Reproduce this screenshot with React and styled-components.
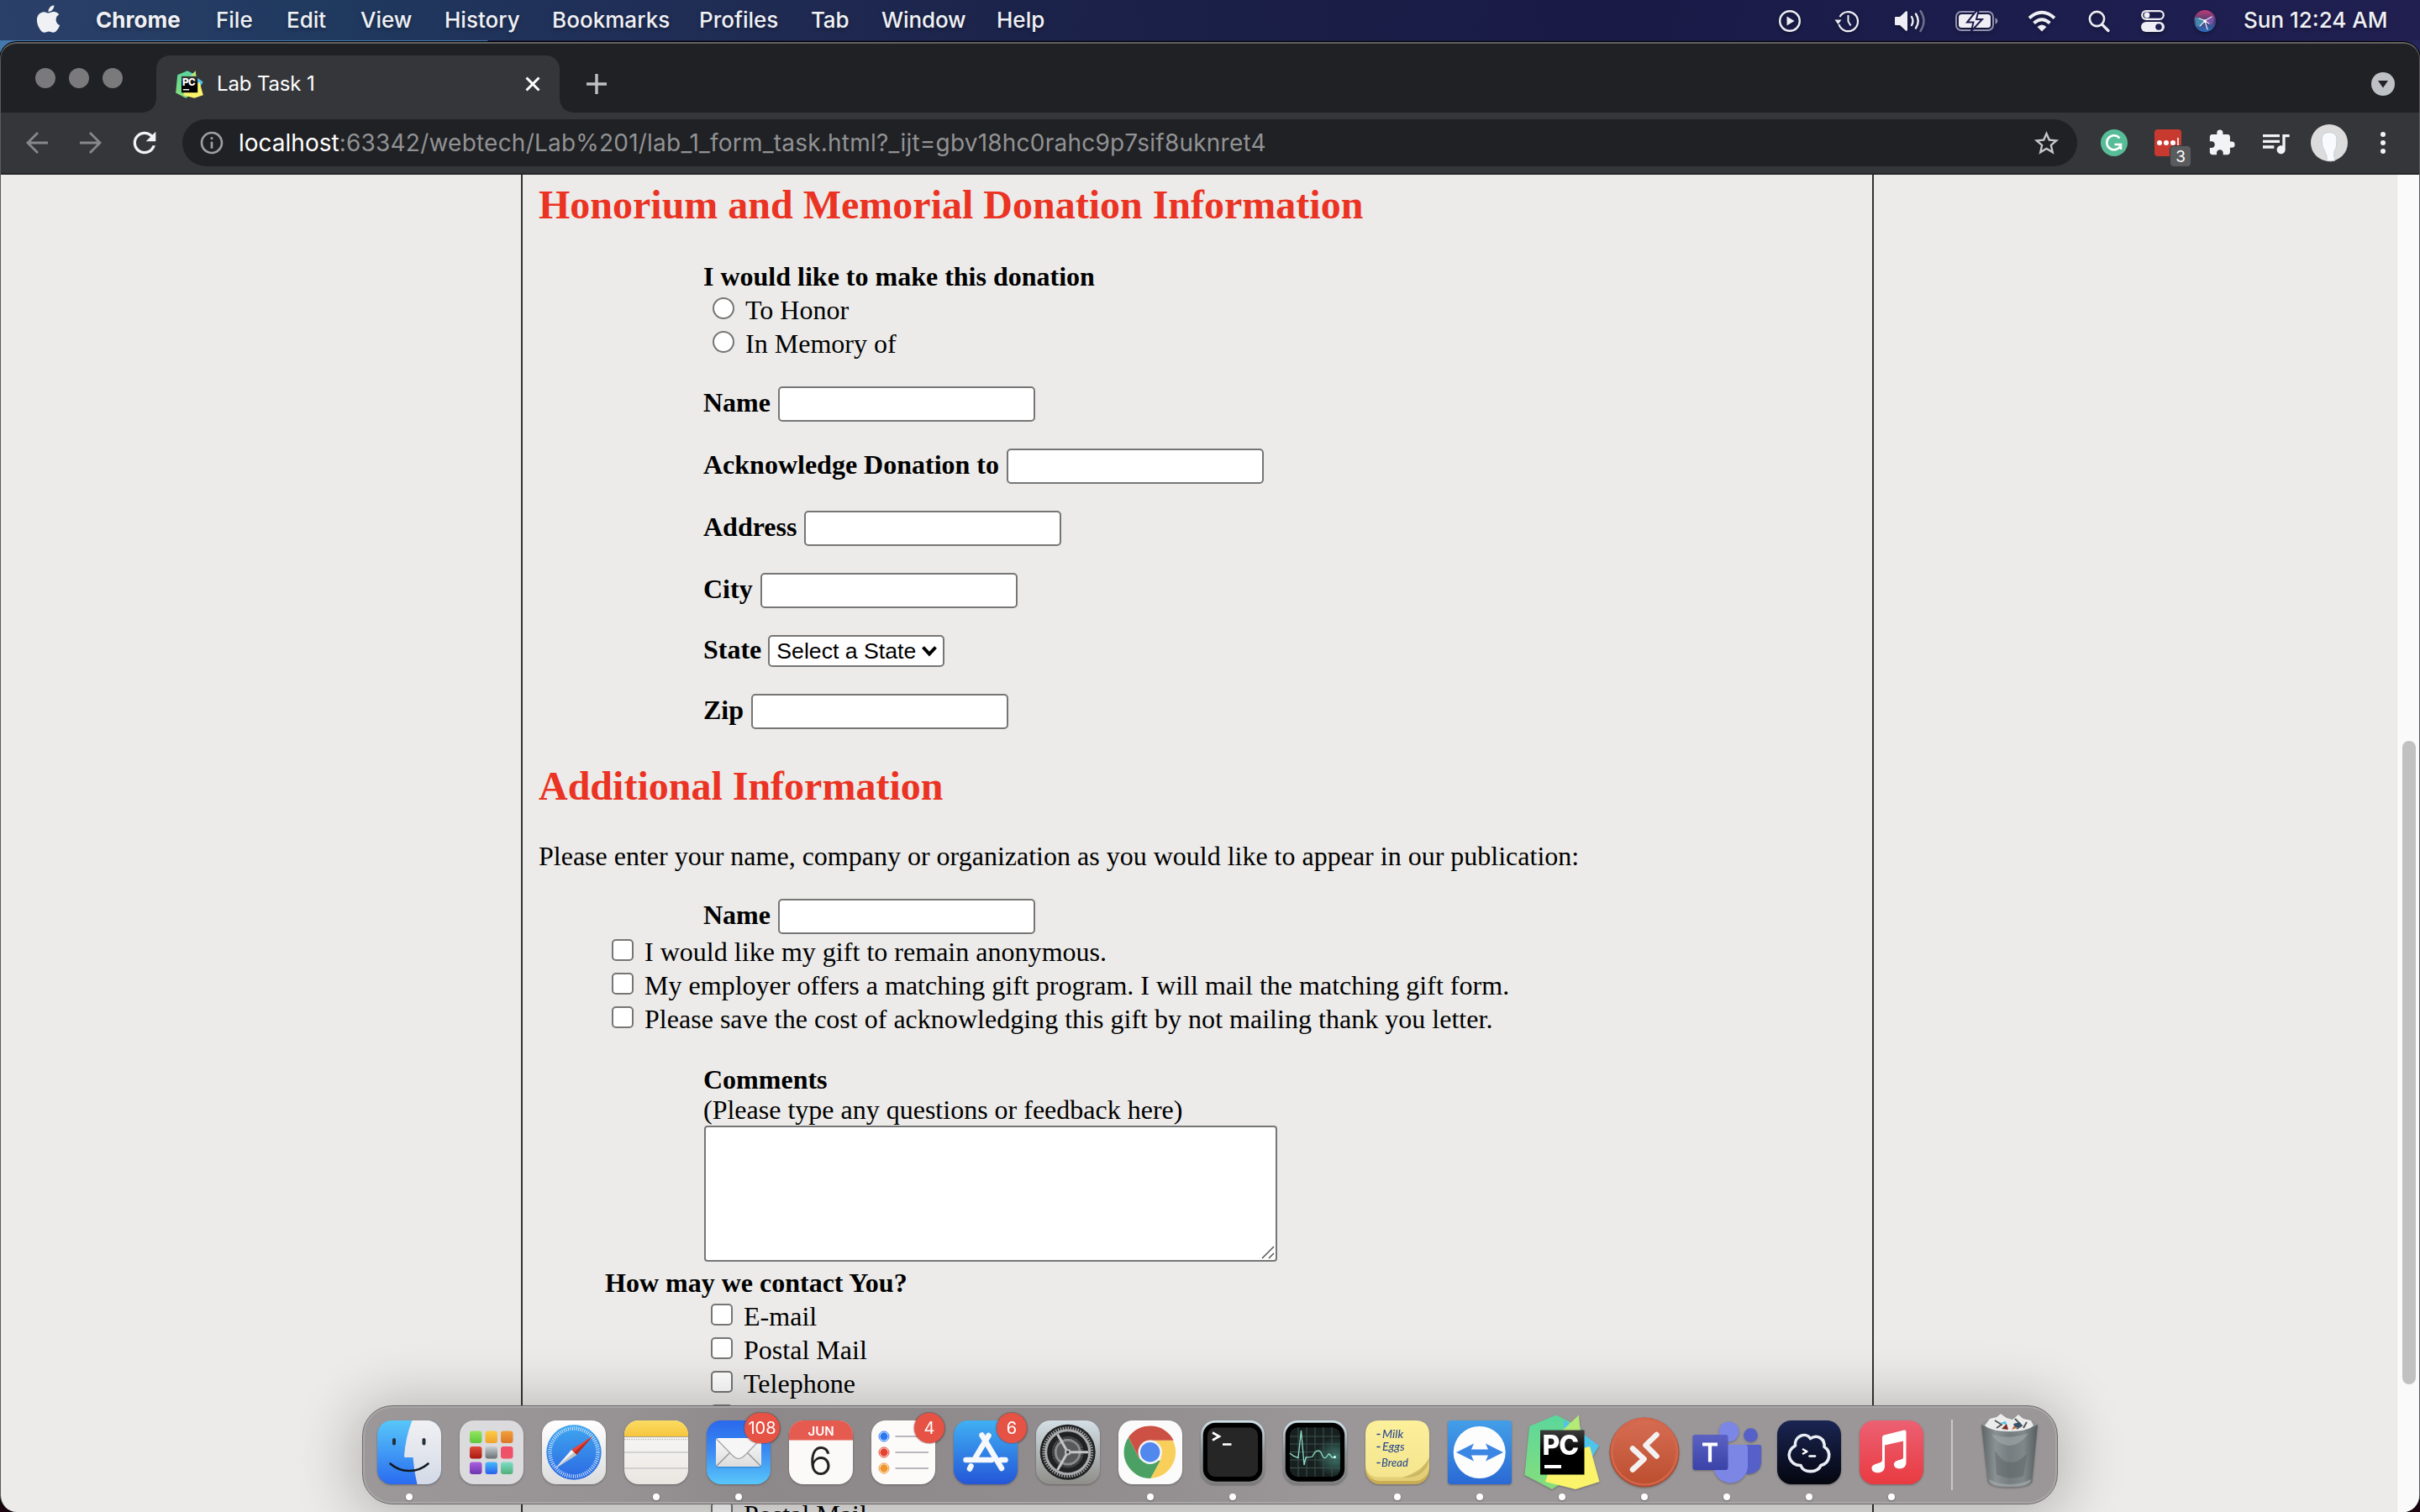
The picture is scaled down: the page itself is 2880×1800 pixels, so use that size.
import React from "react";
import styled, { createGlobalStyle, css } from "styled-components";
import { FaApple } from "react-icons/fa";
import { MdStarBorder, MdRefresh, MdInfoOutline, MdExtension, MdQueueMusic } from "react-icons/md";

const Global = createGlobalStyle`
  * { box-sizing: border-box; }
  html, body { margin: 0; padding: 0; overflow: hidden; }
  svg { display: block; overflow: visible; flex: none; }
`;

const ui = `Inter, Roboto, "Liberation Sans", sans-serif`;

const Desktop = styled.div`
  position: relative;
  width: 2880px;
  height: 1800px;
  display: flex;
  flex-direction: column;
  gap: 2px;
  overflow: hidden;
  background: linear-gradient(90deg, #4379ad 0, #4379ad 580px, #16183a 581px, #1a1a42 2800px, #25265a 100%) 0 0 / 100% 100px no-repeat #1c0410;
  font-family: ${ui};
`;

/* ---------- menu bar ---------- */

const MenuBar = styled.div`
  height: 48px;
  flex: none;
  display: flex;
  align-items: center;
  color: #f0f1f5;
  font-size: 26px;
  background: linear-gradient(90deg, #2b4069 0, #20395f 400px, #20325a 620px, #1f2a52 930px, #1b2148 1300px, #191b46 1900px, #1e1e50 2600px, #201f50 100%);
`;

const AppleSlot = styled.div`
  width: 114px;
  padding-left: 39px;
  padding-bottom: 4px;
`;

const MenuItem = styled.span`
  width: ${(p) => p.$w}px;
  font-weight: ${(p) => (p.$bold ? 700 : 500)};
  letter-spacing: ${(p) => p.$ls || 0}px;
  line-height: 32px;
  white-space: nowrap;
  text-shadow: 0 2px 4px rgba(0, 0, 0, 0.35);
`;

const StatusArea = styled.div`
  margin-left: auto;
  display: flex;
  align-items: center;
`;

const StatusSlot = styled.div`
  width: ${(p) => p.$w}px;
  display: flex;
  justify-content: center;
  padding-top: 2px;
  filter: drop-shadow(0 2px 2px rgba(0, 0, 0, 0.35));
`;

const Clock = styled(MenuItem)`
  margin-left: 20px;
`;

/* ---------- browser chrome ---------- */

const Window = styled.div`
  width: 2880px;
  height: 1750px;
  display: flex;
  flex-direction: column;
  border-radius: 20px;
  border-top: 2px solid #626164;
  border-left: 1px solid #5a5a5c;
  border-right: 1px solid #5a5a5c;
  box-shadow: 0 0 0 1px #000;
  background: #202124;
  overflow: hidden;
`;

const TabStrip = styled.div`
  height: 82px;
  flex: none;
  display: flex;
  align-items: flex-end;
  padding: 0 29px 0 40px;
`;

const Lights = styled.div`
  display: flex;
  gap: 16px;
  padding: 0 40px 29px 1px;
`;

const Light = styled.span`
  width: 24px;
  height: 24px;
  border-radius: 50%;
  background: #7a797c;
`;

const Tab = styled.div`
  position: relative;
  width: 480px;
  height: 68px;
  display: flex;
  align-items: center;
  padding: 0 23px 0 23px;
  border-radius: 16px 16px 0 0;
  background: #35363a;
  color: #fff;
  &::before,
  &::after {
    content: "";
    position: absolute;
    bottom: 0;
    width: 16px;
    height: 16px;
  }
  &::before {
    left: -16px;
    background: radial-gradient(circle at 0 0, transparent 15.5px, #35363a 16px);
  }
  &::after {
    right: -16px;
    background: radial-gradient(circle at 100% 0, transparent 15.5px, #35363a 16px);
  }
`;

const TabTitle = styled.span`
  flex: 1;
  padding-left: 16px;
  font-size: 24px;
  line-height: 30px;
  letter-spacing: -0.15px;
`;

const NewTab = styled.div`
  padding: 0 0 22px 32px;
`;

const TabSearch = styled.div`
  margin: 0 0 20px auto;
`;

const Toolbar = styled.div`
  height: 74px;
  flex: none;
  display: flex;
  align-items: center;
  padding: 0 11px;
  background: #35363a;
  border-bottom: 2px solid #252628;
`;

const ToolSlot = styled.div`
  position: relative;
  width: 64px;
  height: 56px;
  display: flex;
  align-items: center;
  justify-content: center;
  color: ${(p) => (p.$dim ? "#87888b" : "#f1f3f4")};
`;

const Omnibox = styled.div`
  flex: 1;
  height: 56px;
  margin: 0 12px 0 13px;
  display: flex;
  align-items: center;
  padding: 0 19px;
  border-radius: 28px;
  background: #202124;
  color: #c5c7ca;
`;

const Url = styled.div`
  flex: 1;
  padding-left: 16px;
  font-size: 28px;
  line-height: 34px;
  letter-spacing: 0.22px;
  color: #919294;
`;

const Host = styled.span`
  color: #fff;
  letter-spacing: 0;
`;

const LastPass = styled.div`
  width: 32px;
  height: 32px;
  border-radius: 4px;
  background: #c83a30;
  display: flex;
  align-items: center;
  justify-content: center;
`;

const CountBadge = styled.span`
  position: absolute;
  left: 34px;
  top: 31px;
  width: 26px;
  height: 26px;
  border-radius: 5px;
  border: 1px solid #35363a;
  background: #5a5b5d;
  color: #fff;
  font-size: 19px;
  line-height: 26px;
  text-align: center;
`;

/* ---------- page ---------- */

const Viewport = styled.div`
  flex: 1;
  min-height: 0;
  display: flex;
  background: #ecebe9;
  overflow: hidden;
`;

const Page = styled.div`
  width: 2851px;
  padding-left: 619px;
  font-family: "Liberation Serif", "Times New Roman", serif;
  font-size: 32px;
  line-height: 36px;
  color: #000;
  white-space: nowrap;
`;

const Sheet = styled.div`
  width: 1610px;
  height: 1592px;
  padding: 9px 19px 0;
  border-left: 2px solid #333;
  border-right: 2px solid #333;
`;

const Title = styled.h2`
  margin: 0;
  font-size: 48px;
  line-height: 54px;
  font-weight: 700;
  color: #eb3323;
`;

const Group = styled.div`
  display: flex;
  flex-direction: column;
  align-items: flex-start;
  margin-top: ${(p) => p.$mt || 0}px;
  padding-left: ${(p) => p.$indent}px;
  gap: ${(p) => p.$gap || 0}px;
`;

const Line = styled.div`
  margin-top: ${(p) => p.$mt || 0}px;
  font-weight: ${(p) => (p.$bold ? 700 : 400)};
`;

const Field = styled.label`
  display: flex;
  align-items: flex-start;
  gap: ${(p) => (p.$select ? 8 : 9)}px;
  font-weight: 700;
`;

const FieldName = styled.span`
  margin-top: ${(p) => (p.$select ? -1 : 1)}px;
`;

const box = css`
  appearance: none;
  margin: 0;
  padding: 0;
  border: 2px solid #767676;
  background: #fff;
`;

const TextInput = styled.input`
  ${box}
  width: 306px;
  height: 42px;
  border-radius: 5px;
`;

const SelectWrap = styled.span`
  position: relative;
  display: flex;
  svg {
    position: absolute;
    right: 9px;
    top: 13px;
  }
`;

const Select = styled.select`
  ${box}
  width: 210px;
  height: 38px;
  padding: 0 0 0 8px;
  border-radius: 5px;
  font-family: "Liberation Sans", Arial, sans-serif;
  font-size: 26.67px;
  color: #000;
`;

const Option = styled.label`
  height: 40px;
  display: flex;
  align-items: flex-start;
  gap: 13px;
  padding-left: ${(p) => p.$pl || 0}px;
`;

const Radio = styled.input`
  ${box}
  width: 26px;
  height: 26px;
  margin-top: 7px;
  border-radius: 50%;
`;

const Check = styled.input`
  ${box}
  width: 26px;
  height: 26px;
  border-radius: 5px;
  margin-top: 4px;
`;

const OptionText = styled.span`
  margin-top: ${(p) => p.$mt || 1}px;
  letter-spacing: 0.02px;
`;

const AreaWrap = styled.div`
  position: relative;
  margin: 1px 0 0 1px;
  svg {
    position: absolute;
    right: 3px;
    bottom: 3px;
  }
`;

const Area = styled.textarea`
  ${box}
  display: block;
  width: 682px;
  height: 162px;
  border-radius: 4px;
  resize: none;
`;

const ScrollTrack = styled.div`
  width: 27px;
  padding: 674px 0 0 6px;
  background: #fafafa;
  border-left: 1px solid #e6e6e6;
`;

const ScrollThumb = styled.div`
  width: 16px;
  height: 766px;
  border-radius: 8px;
  background: #c1c1c1;
`;

/* ---------- dock ---------- */

const Dock = styled.div`
  position: absolute;
  left: 431px;
  top: 1673px;
  width: 2018px;
  height: 118px;
  display: flex;
  align-items: flex-start;
  padding-left: 6px;
  border-radius: 36px;
  border: 1px solid #6c6a6b;
  background: linear-gradient(90deg, #9c9899 0, #979394 300px, #8d898a 480px, #928e8f 900px, #9b9798 1150px, #9b9798 100%);
  box-shadow: inset 0 0 0 2px #a9a6a7, 0 6px 70px 10px rgba(0, 0, 0, 0.24);
`;

const DockSlot = styled.div`
  position: relative;
  width: 98px;
  height: 116px;
  flex: none;
  display: flex;
  flex-direction: column;
  align-items: center;
  padding-top: 17px;
  filter: drop-shadow(0 1px 1px rgba(0, 0, 0, 0.3));
`;

const Running = styled.span`
  width: 8px;
  height: 8px;
  margin-top: 11px;
  border-radius: 50%;
  background: #fff;
`;

const Badge = styled.span`
  position: absolute;
  left: ${(p) => (p.$wide ? 56 : 62)}px;
  top: 8px;
  width: ${(p) => (p.$wide ? 42 : 36)}px;
  height: 36px;
  border-radius: 18px;
  background: #e65345;
  box-shadow: 0 0 1px 1px rgba(90, 50, 50, 0.4);
  color: #fff;
  font-size: 20px;
  line-height: 37px;
  text-align: center;
`;

const Divider = styled.span`
  width: 2px;
  height: 84px;
  margin: 16px 19px 0 22px;
  background: #c9c7c7;
`;

/* ---------- icon drawings ---------- */

const S = ({ children, size = 76, vb = "0 0 76 76", h }) => (
  <svg width={size} height={h || size} viewBox={vb} fill="none">{children}</svg>
);

const Grad = ({ id, stops, x2 = 0, y2 = 1 }) => (
  <linearGradient id={id} x1="0" y1="0" x2={x2} y2={y2}>
    {stops.map((c, i) => <stop key={i} offset={i / (stops.length - 1)} stopColor={c} />)}
  </linearGradient>
);

const Finder = () => (
  <S>
    <defs>
      <Grad id="fa" stops={["#58c7f9", "#2a6bf0"]} />
      <Grad id="fb" stops={["#f1f1f4", "#d3dae6"]} />
      <clipPath id="fc"><rect width="76" height="76" rx="17" /></clipPath>
    </defs>
    <g clipPath="url(#fc)">
      <rect width="76" height="76" fill="url(#fa)" />
      <path d="M41.500 0C36 14 33 28 32 42.500Q32 44 33.500 44H42.500Q43.500 60 47.500 76H76V0Z" fill="url(#fb)" />
    </g>
    <path d="M20 23V27.500M55.500 23V27.500" stroke="#24303a" strokeWidth="4" strokeLinecap="round" />
    <path d="M15.500 51.500Q25 60 38 60T60.500 51.500" stroke="#111a22" strokeWidth="2.600" strokeLinecap="round" />
  </S>
);

const tiles = [["#92e65e", "#5fc63c"], ["#fbcd46", "#f1a22b"], ["#f0a03b", "#de7627"], ["#e04a3b", "#a8180f"], ["#c5cfd4", "#6b7072"], ["#f04d67", "#ec5468"], ["#ab5fe0", "#6d35b0"], ["#48b9fb", "#2760ea"], ["#7fdcc8", "#4fb078"]];
const Launchpad = () => (
  <S>
    <defs>{tiles.map((t, i) => <Grad key={i} id={"lp" + i} stops={t} />)}</defs>
    <rect width="76" height="76" rx="17" fill="#dbdadd" />
    {tiles.map((t, i) => <rect key={i} x={12 + (i % 3) * 18.500} y={12.500 + Math.floor(i / 3) * 18.500} width="14.500" height="14.500" rx="3.200" fill={`url(#lp${i})`} />)}
  </S>
);

const Safari = () => (
  <S>
    <defs><Grad id="sa" stops={["#fff", "#dcdcdc"]} /><Grad id="sb" stops={["#3fa6ee", "#2b68e4"]} /></defs>
    <rect width="76" height="76" rx="17" fill="url(#sa)" />
    <circle cx="38" cy="38" r="32.700" fill="url(#sb)" />
    <circle cx="38" cy="38" r="28.500" stroke="#dceeff" strokeWidth="4.500" strokeDasharray="0.900 1.590" />
    <path d="M60.500 18.500L41 41L35 35Z" fill="#ea4335" />
    <path d="M60.500 18.500L41 41L38 38Z" fill="#b52b22" />
    <path d="M16 57L35 35L41 41Z" fill="#f4f4f4" />
    <path d="M16 57L38 38L41 41Z" fill="#bfc3c8" />
  </S>
);

const Notes = () => (
  <S>
    <defs>
      <Grad id="na" stops={["#fbdc63", "#f6c63d"]} />
      <Grad id="nb" stops={["#fcfbfb", "#e9e6e1"]} />
      <clipPath id="nc"><rect width="76" height="76" rx="17" /></clipPath>
    </defs>
    <g clipPath="url(#nc)">
      <rect width="76" height="76" fill="url(#nb)" />
      <rect width="76" height="19" fill="url(#na)" />
      <path d="M0 19.500H76" stroke="#a9a08c" />
      <path d="M0 22.500H76" stroke="#b5b1ab" strokeWidth="1.500" strokeDasharray="1.200 1.600" />
      <path d="M0 38H76M0 57H76" stroke="#c9c8c7" strokeWidth="1.600" />
    </g>
  </S>
);

const Mail = () => (
  <S>
    <defs><Grad id="ma" stops={["#2a68ec", "#3b8df3", "#59c6fa"]} /><Grad id="mb" stops={["#fafafa", "#dcdcdd"]} /></defs>
    <rect width="76" height="76" rx="17" fill="url(#ma)" />
    <rect x="11" y="22" width="54" height="34.500" rx="3" fill="#16569e" opacity=".35" />
    <rect x="11" y="21" width="54" height="34" rx="3" fill="url(#mb)" />
    <path d="M12 54L28 38M64 54L48 38" stroke="#8f9092" strokeWidth="1.200" />
    <path d="M12 22.500L31 42Q38 49 45 42L64 22.500" fill="#f6f6f6" stroke="#a2a3a6" strokeWidth="1.200" />
  </S>
);

const Calendar = () => (
  <S>
    <defs><clipPath id="cc"><rect width="76" height="76" rx="17" /></clipPath></defs>
    <g clipPath="url(#cc)">
      <rect width="76" height="76" fill="#fbfaf9" />
      <rect width="76" height="23.500" fill="#e55b50" />
    </g>
    <text x="38" y="18" textAnchor="middle" fontFamily="Inter" fontWeight="600" fontSize="15" fill="#fff">JUN</text>
    <text x="37.500" y="64.500" textAnchor="middle" fontFamily="Inter" fontWeight="300" fontSize="47" fill="#222">6</text>
  </S>
);

const Reminders = () => (
  <S>
    <rect width="76" height="76" rx="17" fill="#fcfbfa" />
    {[["#2a78f2", 19], ["#e5422f", 38], ["#f0962c", 57]].map(([c, y]) => (
      <g key={y}>
        <circle cx="15" cy={y} r="4.700" fill={c} />
        <circle cx="15" cy={y} r="6" stroke={c} strokeWidth="1" />
        <path d={`M28.500 ${y}H68`} stroke="#b9b9bc" strokeWidth="1.800" />
      </g>
    ))}
  </S>
);

const AppStore = () => (
  <S>
    <defs><Grad id="as" stops={["#40b0f3", "#2456d8"]} /></defs>
    <rect width="76" height="76" rx="17" fill="url(#as)" />
    <g stroke="#f6f8fc" strokeWidth="6.500" strokeLinecap="round">
      <path d="M33.500 17.500L57 57" />
      <path d="M41.500 18L26 44" />
      <path d="M14.500 47H45M56 47H61.500" />
      <path d="M20.500 54.500L19 57.500" />
    </g>
  </S>
);

const Settings = () => (
  <S>
    <defs><Grad id="se" stops={["#d3dfe6", "#8f8e89"]} /></defs>
    <rect width="76" height="76" rx="17" fill="url(#se)" />
    <circle cx="37.700" cy="37.700" r="33" fill="#202122" />
    <circle cx="37.700" cy="37.700" r="28.700" stroke="#a3a5a6" strokeWidth="3.500" strokeDasharray="1.500 1.500" />
    <circle cx="37.700" cy="37.700" r="26" stroke="#a9abac" strokeWidth="3" />
    <circle cx="37.700" cy="37.700" r="17.500" stroke="#65676a" strokeWidth="2.500" strokeDasharray="1.200 1.200" />
    <circle cx="37.700" cy="37.700" r="14.500" fill="#58595b" stroke="#8a8c8e" strokeWidth="3" />
    <path d="M37.700 37.700H62M37.700 37.700L25.500 16.500M37.700 37.700L25.500 59" stroke="#c4c6c7" strokeWidth="3" />
    <circle cx="37.700" cy="37.700" r="3.800" fill="#b8babb" />
    <circle cx="37.700" cy="37.700" r="1.600" fill="#333" />
  </S>
);

const ChromeIcon = () => (
  <S>
    <rect width="76" height="76" rx="17" fill="#fbfbfb" />
    <g transform="translate(37.700 37.700)">
      <path d="M27.100 -14A31.300 31.300 0 0 1 0 31.300L13 7.500L0 -14Z" fill="#f9cf5b" />
      <path d="M-25.800 -17.500A31.300 31.300 0 0 0 0.500 31.300L12 10L-13 7.500Z" fill="#4ba164" />
      <path d="M-25.800 -17.700A31.300 31.300 0 0 1 28 -14H0L-13 7.500Z" fill="#cc5144" />
      <circle r="14.200" fill="#f4f5f7" />
      <circle r="11.700" fill="#5088ee" />
    </g>
  </S>
);

const Screen = ({ children }) => (
  <>
    <defs><Grad id="te" stops={["#cfe3ea", "#8f9598", "#7e7e80"]} /></defs>
    <rect width="76" height="76" rx="17" fill="url(#te)" />
    <rect x="2.700" y="2.700" width="70.500" height="70" rx="15" fill="#000" />
    {children}
  </>
);

const Terminal = () => (
  <S>
    <Screen>
      <rect x="8" y="8.500" width="60" height="58.500" rx="9" fill="#262627" />
      <path d="M14 14.500L22 19L14 23.500" stroke="#fff" strokeWidth="2.600" />
      <path d="M26 28.500H36.500" stroke="#fff" strokeWidth="2.600" />
    </Screen>
  </S>
);

const Activity = () => (
  <S>
    <Screen>
      <defs><radialGradient id="ac" cx="0.900" cy="0.600" r="0.400"><stop offset="0" stopColor="#3f7a70" /><stop offset="1" stopColor="#17201f" /></radialGradient></defs>
      <rect x="8" y="8.500" width="60" height="58.500" rx="9" fill="url(#ac)" />
      <path d="M18 8V67M28 8V67M38 8V67M48 8V67M58 8V67M8 19H68M8 28H68M8 37.500H68M8 47H68M8 56.500H68" stroke="#3d524d" strokeWidth="1" />
      <path d="M8 39Q12 43 18 44.500L21.500 12L25 53L27 44Q32 44 35 43C38 36 42 34 45 38C48 46 50 47 54 40Q56 40 58 44H62" stroke="#8fe0c9" strokeWidth="1.300" />
      <circle cx="61.500" cy="43.500" r="1.500" fill="#d8fff3" />
    </Screen>
  </S>
);

const Stickies = () => (
  <S>
    <defs><Grad id="st" stops={["#fdf09b", "#f4e58e"]} /></defs>
    <rect y="8" width="76" height="68" rx="17" fill="#c9ad55" />
    <rect y="5" width="76" height="67" rx="17" fill="#e3cf77" />
    <path d="M17 0H59Q76 0 76 17V44C73 56 64 66 50 67.500H17Q0 67.500 0 50.500V17Q0 0 17 0Z" fill="url(#st)" />
    <path d="M76 44C70 56 60 63 44 68C60 69 74 62 76 44Z" fill="#b59d4c" opacity=".6" />
    <path d="M14 16.500H17M14 31.500H17M14 50.500H17" stroke="#2d4d8e" strokeWidth="1.500" strokeLinecap="round" />
    <g fontFamily="Lato" fontStyle="italic" fontWeight="500" fontSize="14" fill="#2d4d8e">
      <text x="20" y="21">Milk</text>
      <text x="20" y="36">Eggs</text>
      <text x="19" y="54.500" fontSize="13">Bread</text>
    </g>
  </S>
);

const TeamViewer = () => (
  <S>
    <defs><Grad id="tv" stops={["#439fe8", "#2a69d4"]} /></defs>
    <rect width="76" height="76" rx="4" fill="url(#tv)" />
    <circle cx="37.700" cy="38" r="31" fill="#fdfdfd" />
    <path d="M10 38L31 27.500L28 34.500H48L45 27.500L66 38L45 48.500L48 41.500H28L31 48.500Z" fill="#3c87e4" />
  </S>
);

const PyCharm = ({ size = 76, id = "a" }) => (
  <S size={size} vb={id === "a" ? "0 0 76 76" : "-7 -7 90 90"}>
    <defs>
      <Grad id={"pc" + id} stops={["#5ad79c", "#86de7c"]} />
      <Grad id={"pk" + id} stops={["#3c3c3c", "#000", "#000"]} />
    </defs>
    <path d="M-1 7L31 -6.500L60 8L60 60L26 82L-6.500 65Z" fill={`url(#pc${id})`} />
    <path d="M40 -1L82 30L70 50L40 40Z" fill="#4fc4ea" />
    <path d="M58 -6.500L36 14L60 18Z" fill="#b6ea76" />
    <path d="M71 31L82.500 73L54 82L18 73L24 55L55 35Z" fill="#fbf369" />
    <rect x="12" y="11.500" width="52.500" height="53" fill={`url(#pk${id})`} />
    <text x="14.500" y="41" fontFamily="Inter" fontWeight="800" fontSize="32" letterSpacing="-1.200" fill="#fff">PC</text>
    <rect x="17" y="53" width="20" height="4" fill="#fff" />
  </S>
);

const RemoteDesktop = () => (
  <S>
    <defs><Grad id="rd" stops={["#d56c51", "#bd4f30"]} /></defs>
    <circle cx="38" cy="38" r="41.500" fill="#b04a30" />
    <circle cx="38" cy="37" r="40.500" fill="#d3674c" />
    <circle cx="38" cy="37.800" r="37.500" fill="url(#rd)" />
    <path d="M52.500 17L39.500 29.500L52.500 42.500" stroke="#f3f1f1" strokeWidth="6.500" strokeLinejoin="round" strokeLinecap="round" fill="none" />
    <path d="M24 33.500L37.500 46L24 58.500" stroke="#f3f1f1" strokeWidth="6.500" strokeLinejoin="round" strokeLinecap="round" fill="none" />
  </S>
);

const Teams = () => (
  <S>
    <defs><Grad id="ti" stops={["#5b62c3", "#3b42a8"]} /></defs>
    <circle cx="66.500" cy="17.500" r="8.300" fill="#5560c8" />
    <path d="M58 29H77Q79 29 79 31V49A14.500 14.500 0 0 1 56 61Z" fill="#5560c8" />
    <circle cx="40.500" cy="13.500" r="12" fill="#7c86e4" />
    <path d="M24 29H60Q63 29 63 32V54A20.500 20.500 0 0 1 22 54Z" fill="#7c86e4" />
    <rect x="-2.500" y="17" width="42" height="42" rx="3" fill="url(#ti)" />
    <path d="M9 28.500H27M18 28.500V49.500" stroke="#fff" strokeWidth="4.200" />
  </S>
);

const Termius = () => (
  <S>
    <defs><Grad id="tm" stops={["#1b2553", "#04060f"]} /></defs>
    <rect width="76" height="76" rx="17" fill="url(#tm)" />
    <path d="M21.500 30C20 19 34 13 39.500 21.500C48 16 57 22 56 31.500C65 37 63 51 52 53.500C48 63 31 63 28 53.500C15 54 8 38 21.500 30Z" stroke="#e9edf4" strokeWidth="3.600" strokeLinejoin="round" />
    <path d="M30 34L35.500 37L30 40" stroke="#fff" strokeWidth="2.400" strokeLinejoin="round" />
    <path d="M38.500 42.500H45" stroke="#fff" strokeWidth="2.600" strokeLinecap="round" />
  </S>
);

const Music = () => (
  <S>
    <defs><Grad id="mu" stops={["#ec6073", "#e93a41"]} /></defs>
    <rect width="76" height="76" rx="17" fill="url(#mu)" />
    <path d="M27 20Q27 18 29 17.400L53 11.500Q55.500 11 55.500 13.500V50C55.500 60 41 59 41 52.500C41 46 52 48 52 44V24.500L30 29.500V54.500C30 65 14.500 64 14.500 57C14.500 50 27 52.500 27 47Z" fill="#fff" />
  </S>
);

const Trash = () => (
  <S>
    <defs><Grad id="tr" x2={1} y2={0} stops={["#5c6365", "#8b9294", "#767d80", "#80888a", "#565c5e"]} /></defs>
    <ellipse cx="37.500" cy="6" rx="33" ry="8" fill="#8d9394" />
    <path d="M8 6L14 -2L22 -4L27 -8L34 -3L41 -1L48 -7L54 -2L63 0L66 6L60 11Q38 15 14 11Z" fill="#ececec" />
    <path d="M20 0L28 5L22 9M44 -2L52 6L46 10M58 2L54 9" stroke="#55585a" strokeWidth="2" />
    <path d="M26 3L33 1L34 5Z" fill="#4fc0e8" />
    <path d="M28 10L34 4L36 11Z" fill="#7a2d25" />
    <path d="M42 4L50 2L52 7L44 9Z" fill="#39536b" />
    <path d="M40 11L43 6L46 9Z" fill="#c8713b" />
    <path d="M4 5Q37 23 71 5L64.500 72Q62 79.500 38 79.500T11.500 72Z" fill="url(#tr)" opacity=".97" />
    <path d="M16 16Q36 24 60 15Q50 30 36 30Q22 28 16 16Z" fill="#a4aaab" opacity=".6" />
    <path d="M20 36Q36 62 58 40L54 66Q38 72 22 64Z" fill="#596062" opacity=".45" />
    <path d="M12.500 70Q37 82 63.500 70Q62 79 38 79T12.500 70Z" fill="#a0a7a9" opacity=".75" />
  </S>
);

const ink = "#eeeef4";
const statusIcons = [
  [68, <S size={28} vb="0 0 28 28"><circle cx="14" cy="14" r="11.800" stroke={ink} strokeWidth="2.400" /><path d="M10.500 8.500V19.500L19.500 14Z" fill={ink} /></S>],
  [68, <S size={28} vb="0 0 28 28"><path d="M5.500 9A11.500 11.500 0 1 1 4.500 18" stroke={ink} strokeWidth="2.200" /><path d="M-0.500 12.500H7.500L3.500 18Z" fill={ink} /><path d="M15.500 7V14.500L18.500 19.500" stroke={ink} strokeWidth="2" /></S>],
  [82, <S size={38} h={28} vb="0 0 38 28"><path d="M1 10Q1 9 2 9H7L14 2.500Q16 1.500 16 3.500V24.500Q16 26.500 14 25.500L7 19H2Q1 19 1 18Z" fill={ink} /><path d="M21 9Q24 14 21 19" stroke={ink} strokeWidth="2.400" strokeLinecap="round" /><path d="M26 5.500Q31.500 14 26 22.500" stroke={ink} strokeWidth="2.400" strokeLinecap="round" /><path d="M31.500 2Q39.500 14 31.500 26" stroke={ink} strokeWidth="2.400" strokeLinecap="round" opacity=".4" /></S>],
  [76, <S size={52} h={26} vb="0 0 52 26"><rect x="2" y="2" width="44" height="22" rx="6" stroke="#9091b0" strokeWidth="2" /><rect x="5" y="5" width="38" height="16" rx="3.500" fill={ink} /><path d="M26 1L15 14.500H22.500L20 25L33 11H26L28.500 1Z" fill={ink} stroke="#1c1c4c" strokeWidth="2" /><path d="M48.500 9V17Q51.500 15.500 51.500 13T48.500 9Z" fill="#9091b0" /></S>],
  [80, <S size={34} h={26} vb="0 0 34 26"><path d="M2 9.500Q17 -4 32 9.500" stroke={ink} strokeWidth="3.800" /><path d="M7.500 15.500Q17 7 26.500 15.500" stroke={ink} strokeWidth="3.800" /><path d="M11.500 20Q17 15 22.500 20L17 25.500Z" fill={ink} /></S>],
  [56, <S size={26} vb="0 0 26 26"><circle cx="10.500" cy="10.500" r="8.600" stroke={ink} strokeWidth="2.600" /><path d="M16.500 17L24 24.500" stroke={ink} strokeWidth="3.200" strokeLinecap="round" /></S>],
  [72, <S size={28} vb="0 0 28 28"><rect x="1.200" y="2.200" width="25.600" height="9.600" rx="4.800" stroke={ink} strokeWidth="2.200" /><circle cx="7" cy="7" r="3.400" fill={ink} /><rect x="0" y="15" width="28" height="12" rx="6" fill={ink} /><circle cx="21" cy="21" r="3.800" fill="#1e1e50" /></S>],
  [52, <S size={28} vb="0 0 28 28"><defs><Grad id="si" stops={["#c13a78", "#45406f", "#2b6fc0"]} /></defs><circle cx="14" cy="14" r="13" fill="url(#si)" /><path d="M2 10Q9 9 14 14Q8 20 4 21Z" fill="#3fa7c4" opacity=".7" /><path d="M14 14L24 8Q26 14 22 19Z" fill="#8f5ac0" opacity=".7" /><path d="M7 11L14 13.500L22 9M14 14L8 20M14 14L17 24M14 14L19 17" stroke="#f0e2f2" strokeWidth="1.200" strokeLinecap="round" /><circle cx="14" cy="14" r="1.800" fill="#fff" /></S>],
];

const menus = [["Chrome", 143, true, 0.050], ["File", 84, false, 0], ["Edit", 88, false, 0], ["View", 100, false, 0], ["History", 128, false, 0], ["Bookmarks", 175, false, 0.050], ["Profiles", 133, false, 0], ["Tab", 84, false, -0.200], ["Window", 137, false, -0.100], ["Help", 80, false, 0]];

const dockApps = [
  [Finder, true], [Launchpad], [Safari], [Notes, true], [Mail, true, "108"], [Calendar], [Reminders, false, "4"],
  [AppStore, false, "6"], [Settings], [ChromeIcon, true], [Terminal, true], [Activity], [Stickies, true], [TeamViewer, true],
  [PyCharm, true], [RemoteDesktop, true], [Teams, true], [Termius, true], [Music, true],
];

const CheckRow = ({ children, pl }) => (
  <Option $pl={pl}><Check type="checkbox" />{children && <OptionText>{children}</OptionText>}</Option>
);

const TextField = ({ name }) => (
  <Field><FieldName>{name}</FieldName><TextInput type="text" /></Field>
);

export default function App() {
  return (
    <Desktop>
      <Global />
      <MenuBar>
        <AppleSlot><FaApple size={37} /></AppleSlot>
        {menus.map(([t, w, b, ls]) => <MenuItem key={t} $w={w} $bold={b} $ls={ls}>{t}</MenuItem>)}
        <StatusArea>
          {statusIcons.map(([w, icon], i) => <StatusSlot key={i} $w={w}>{icon}</StatusSlot>)}
          <Clock $w={210} $ls={0}>Sun 12:24 AM</Clock>
        </StatusArea>
      </MenuBar>

      <Window>
        <TabStrip>
          <Lights><Light /><Light /><Light /></Lights>
          <Tab>
            <PyCharm size={33} id="b" />
            <TabTitle>Lab Task 1</TabTitle>
            <S size={18} vb="0 0 18 18"><path d="M1.500 1.500L16.500 16.500M16.500 1.500L1.500 16.500" stroke="#fff" strokeWidth="3" /></S>
          </Tab>
          <NewTab><S size={24} vb="0 0 24 24"><path d="M12 0V24M0 12H24" stroke="#bdc0c4" strokeWidth="3.400" /></S></NewTab>
          <TabSearch><S size={28} vb="0 0 28 28"><circle cx="14" cy="14" r="14" fill="#bdc1c6" /><path d="M8 10H20L14 18.500Z" fill="#202124" /></S></TabSearch>
        </TabStrip>

        <Toolbar>
          <ToolSlot $dim><S size={26} vb="0 0 26 26"><path d="M26 13H2M14 1L2 13L14 25" stroke="currentColor" strokeWidth="2.800" /></S></ToolSlot>
          <ToolSlot $dim><S size={26} vb="0 0 26 26"><path d="M0 13H24M12 1L24 13L12 25" stroke="currentColor" strokeWidth="2.800" /></S></ToolSlot>
          <ToolSlot><MdRefresh size={40} /></ToolSlot>
          <Omnibox>
            <MdInfoOutline size={32} color="#9aa0a6" />
            <Url><Host>localhost</Host>:63342/webtech/Lab%201/lab_1_form_task.html?_ijt=gbv18hc0rahc9p7sif8uknret4</Url>
            <MdStarBorder size={35} />
          </Omnibox>
          <ToolSlot>
            <S size={32} vb="0 0 32 32"><circle cx="16" cy="16" r="16" fill="#57bd98" /><path d="M22.500 10.500A8.500 8.500 0 1 0 24 18H16.500M24 17V24" stroke="#fff" strokeWidth="2.600" /></S>
          </ToolSlot>
          <ToolSlot>
            <LastPass><S size={26} h={12} vb="0 0 26 12"><circle cx="3" cy="6" r="3" fill="#fff" /><circle cx="11" cy="6" r="3" fill="#fff" /><circle cx="19" cy="6" r="3" fill="#fff" /><path d="M25 0V12" stroke="#fff" strokeWidth="1.600" /></S></LastPass>
            <CountBadge>3</CountBadge>
          </ToolSlot>
          <ToolSlot><MdExtension size={34} /></ToolSlot>
          <ToolSlot><MdQueueMusic size={40} /></ToolSlot>
          <ToolSlot>
            <S size={44} vb="0 0 44 44"><circle cx="22" cy="22" r="22" fill="#dcdcdc" /><path d="M13 18Q13 9.500 22 9.500T31 18Q31.500 27 28 33Q27 38 29 43Q24 44.500 19 43.500Q20 38 17 33Q13 27 13 18Z" fill="#f8fafc" stroke="#c5ced8" /></S>
          </ToolSlot>
          <ToolSlot><S size={6} h={28} vb="0 0 6 28"><circle cx="3" cy="4" r="3" fill="#f1f3f4" /><circle cx="3" cy="14" r="3" fill="#f1f3f4" /><circle cx="3" cy="24" r="3" fill="#f1f3f4" /></S></ToolSlot>
        </Toolbar>

        <Viewport>
          <Page>
            <Sheet>
              <Title>Honorium and Memorial Donation Information</Title>
              <Group $indent={196} $mt={40}>
                <Line $bold>I would like to make this donation</Line>
                <Option $pl={11}><Radio type="radio" name="k" /><OptionText $mt={4}>To Honor</OptionText></Option>
                <Option $pl={11}><Radio type="radio" name="k" /><OptionText $mt={4}>In Memory of</OptionText></Option>
              </Group>
              <Group $indent={196} $mt={33} $gap={32}>
                <TextField name="Name" />
                <TextField name="Acknowledge Donation to" />
                <TextField name="Address" />
                <TextField name="City" />
                <Field $select>
                  <FieldName $select>State</FieldName>
                  <SelectWrap>
                    <Select><option>Select a State</option></Select>
                    <S size={18} h={12} vb="0 0 18 12"><path d="M1.500 1.500L9 9.500L16.500 1.500" stroke="#000" strokeWidth="4" /></S>
                  </SelectWrap>
                </Field>
                <TextField name="Zip" />
              </Group>
              <Group $indent={0} $mt={41}>
                <Title>Additional Information</Title>
                <Line $mt={38}>Please enter your name, company or organization as you would like to appear in our publication:</Line>
              </Group>
              <Group $indent={196} $mt={33}><TextField name="Name" /></Group>
              <Group $indent={87} $mt={2}>
                <CheckRow>I would like my gift to remain anonymous.</CheckRow>
                <CheckRow>My employer offers a matching gift program. I will mail the matching gift form.</CheckRow>
                <CheckRow>Please save the cost of acknowledging this gift by not mailing thank you letter.</CheckRow>
              </Group>
              <Group $indent={196} $mt={33}>
                <Line $bold>Comments</Line>
                <Line>(Please type any questions or feedback here)</Line>
                <AreaWrap>
                  <Area />
                  <S size={16} vb="0 0 16 16"><path d="M1 15L15 1M9 15L15 9" stroke="#555" strokeWidth="1.500" /></S>
                </AreaWrap>
              </Group>
              <Group $indent={79} $mt={7}>
                <Line $bold>How may we contact You?</Line>
                <Group $indent={126} $mt={3}>
                  <CheckRow>E-mail</CheckRow>
                  <CheckRow>Postal Mail</CheckRow>
                  <CheckRow>Telephone</CheckRow>
                  <CheckRow />
                </Group>
              </Group>
              <Group $indent={205} $mt={76}>
                <CheckRow>Postal Mail</CheckRow>
              </Group>
            </Sheet>
          </Page>
          <ScrollTrack><ScrollThumb /></ScrollTrack>
        </Viewport>
      </Window>

      <Dock>
        {dockApps.map(([Icon, running, badge], i) => (
          <DockSlot key={i}>
            <Icon />
            {running && <Running />}
            {badge && <Badge $wide={badge.length > 1}>{badge}</Badge>}
          </DockSlot>
        ))}
        <Divider />
        <DockSlot><Trash /></DockSlot>
      </Dock>
    </Desktop>
  );
}
